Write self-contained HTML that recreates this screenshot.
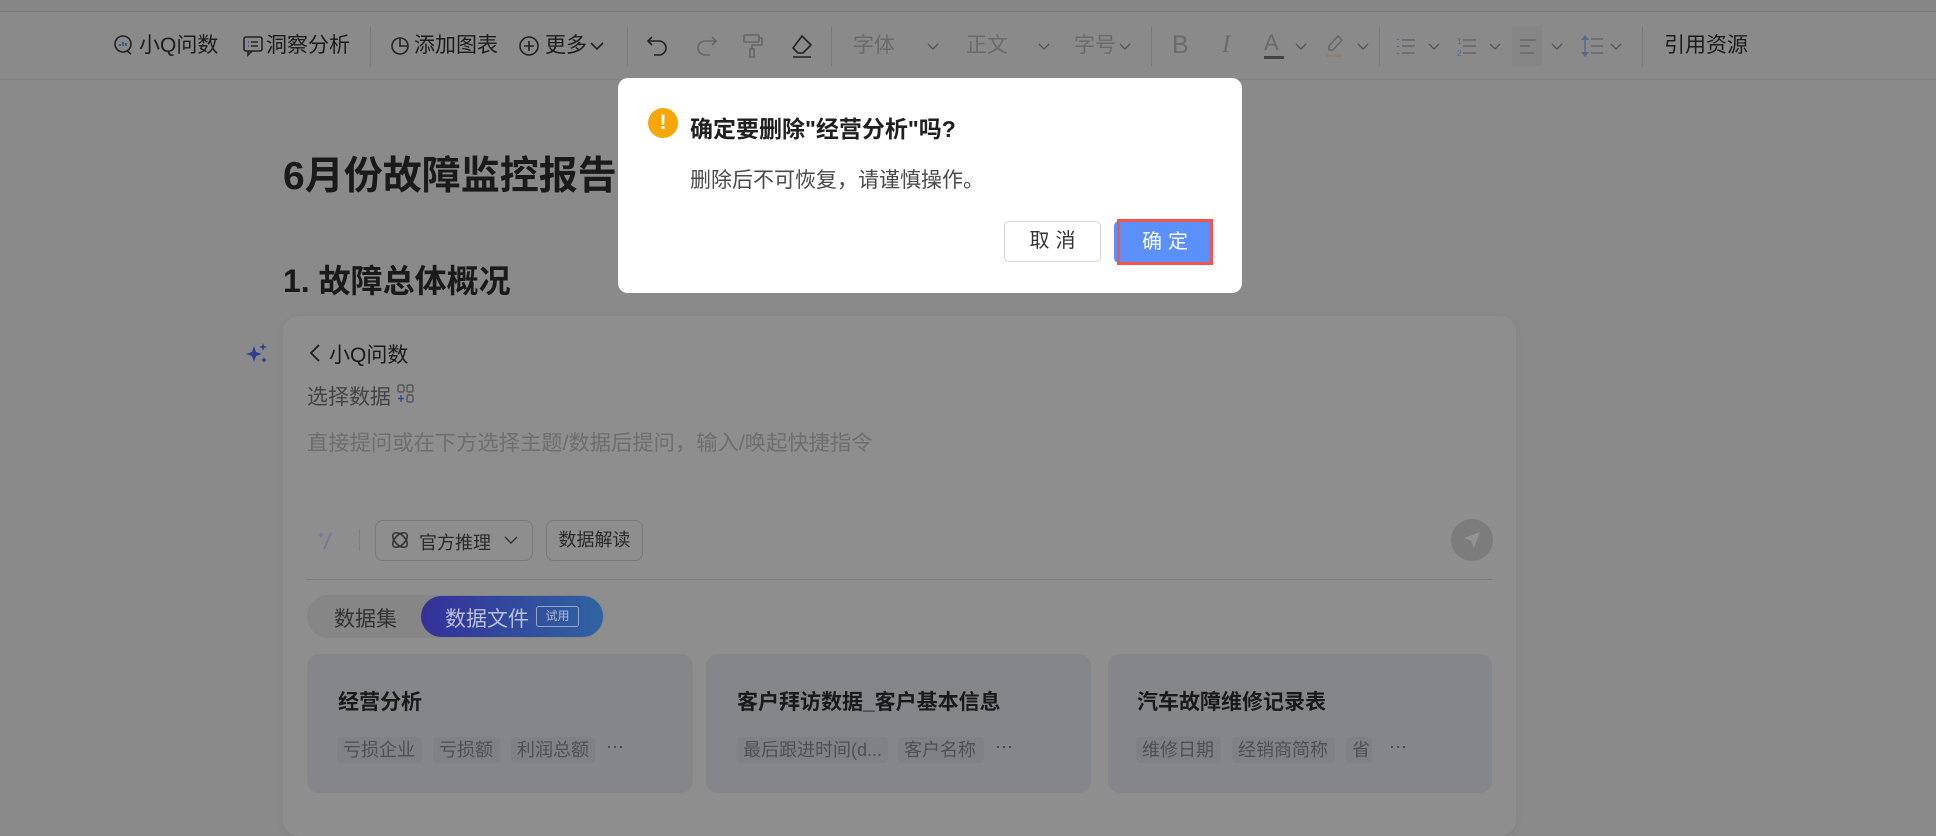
<!DOCTYPE html>
<html><head><meta charset="utf-8">
<style>
*{margin:0;padding:0;box-sizing:border-box}
body{width:1936px;height:808px;overflow:hidden;background:#8a8a8a;font-family:"Liberation Sans","Noto Sans CJK SC",sans-serif;position:relative;color:#1e1e1e}
.a{position:absolute;white-space:nowrap}
.tb{font-size:21px;line-height:24px;color:#1c1c1c}
.dis{color:#6a6a6a}
.sep{position:absolute;width:1px;background:#7a7a7a;top:26px;height:40px}
.chev{position:absolute;width:14px;height:10px}
.chip{position:absolute;height:26px;top:737px;background:#7f8185;border-radius:4px;font-size:18px;line-height:26px;color:#4e5054;padding:0 6px;white-space:nowrap;overflow:hidden}
.dc{position:absolute;top:654px;height:139px;background:#85868a;border-radius:12px}
.dct{position:absolute;top:686px;font-size:21px;font-weight:bold;color:#1a1a1a;white-space:nowrap}
.dots{position:absolute;top:736px;font-size:18px;color:#444}
</style></head><body>
<svg width="0" height="0" style="position:absolute"><defs><symbol id="cv" viewBox="0 0 14 10"><path d="M2 2l5 5 5-5" fill="none" stroke="#555" stroke-width="1.3"/></symbol></defs></svg>
<div class="a" style="left:0;top:0;width:1936px;height:12px;background:#868686;border-bottom:1px solid #7d7d7d"></div>
<div class="a" style="left:0;top:79px;width:1936px;height:1px;background:#7f7f7f"></div>

<svg class="a" style="left:113px;top:34px" width="22" height="22" viewBox="0 0 22 22"><circle cx="10" cy="10" r="8" fill="none" stroke="#222" stroke-width="1.6"/><path d="M7 12v-2M10 12V8M13 12v-3" stroke="#2d4ea0" stroke-width="1.6"/><path d="M14 17l4 3" stroke="#222" stroke-width="1.6"/></svg>
<div class="a tb" style="left:139px;top:34px">小Q问数</div>
<svg class="a" style="left:242px;top:35px" width="22" height="22" viewBox="0 0 22 22"><rect x="2" y="2" width="18" height="14" rx="2" fill="none" stroke="#222" stroke-width="1.6"/><path d="M6 16v4l4-4" fill="none" stroke="#222" stroke-width="1.6"/><path d="M6 7h1M6 11h1" stroke="#2d4ea0" stroke-width="1.6"/><path d="M9 7h7M9 11h7" stroke="#222" stroke-width="1.6"/></svg>
<div class="a tb" style="left:266px;top:34px">洞察分析</div>
<div class="sep" style="left:370px"></div>
<svg class="a" style="left:389px;top:35px" width="22" height="22" viewBox="0 0 22 22"><circle cx="11" cy="11" r="8" fill="none" stroke="#222" stroke-width="1.6"/><path d="M11 3v8h8" fill="none" stroke="#222" stroke-width="1.6"/></svg>
<div class="a tb" style="left:414px;top:34px">添加图表</div>
<svg class="a" style="left:518px;top:35px" width="22" height="22" viewBox="0 0 22 22"><circle cx="11" cy="11" r="9" fill="none" stroke="#222" stroke-width="1.6"/><path d="M11 6v10M6 11h10" stroke="#222" stroke-width="1.6"/></svg>
<div class="a tb" style="left:545px;top:34px">更多</div>
<svg class="a" style="left:589px;top:40px" width="16" height="12" viewBox="0 0 16 12"><path d="M2 3l6 6 6-6" fill="none" stroke="#222" stroke-width="1.6"/></svg>
<div class="sep" style="left:627px"></div>
<svg class="a" style="left:646px;top:33px" width="24" height="26" viewBox="0 0 24 26"><path d="M6 4L2 8l4 4M2 8h11a7 7 0 010 14H8" fill="none" stroke="#222" stroke-width="1.6"/></svg>
<svg class="a" style="left:694px;top:33px" width="24" height="26" viewBox="0 0 24 26"><path d="M18 4l4 4-4 4M22 8H11a7 7 0 000 14h5" fill="none" stroke="#666" stroke-width="1.6"/></svg>
<svg class="a" style="left:741px;top:33px" width="24" height="26" viewBox="0 0 24 26"><rect x="3" y="2" width="15" height="7" rx="1" fill="none" stroke="#666" stroke-width="1.6"/><path d="M18 5h3v7H11v4" fill="none" stroke="#666" stroke-width="1.6"/><rect x="9" y="16" width="4" height="8" fill="none" stroke="#666" stroke-width="1.6"/></svg>
<svg class="a" style="left:789px;top:33px" width="26" height="26" viewBox="0 0 26 26"><path d="M13 3l9 9-8 8H9l-5-5z" fill="none" stroke="#222" stroke-width="1.6"/><path d="M4 24h18" stroke="#222" stroke-width="1.6"/></svg>
<div class="sep" style="left:831px"></div>
<div class="a tb dis" style="left:853px;top:34px">字体</div>
<svg class="chev" style="left:926px;top:42px"><use href="#cv"/></svg>
<div class="a tb dis" style="left:966px;top:34px">正文</div>
<svg class="chev" style="left:1037px;top:42px"><use href="#cv"/></svg>
<div class="a tb dis" style="left:1074px;top:34px">字号</div>
<svg class="chev" style="left:1118px;top:42px"><use href="#cv"/></svg>
<div class="sep" style="left:1151px"></div>
<div class="a dis" style="left:1172px;top:31px;font-size:25px">B</div>
<div class="a dis" style="left:1222px;top:31px;font-size:25px;font-family:'Liberation Serif',serif;font-style:italic">I</div>
<div class="a dis" style="left:1264px;top:30px;font-size:22px">A</div>
<div class="a" style="left:1264px;top:56px;width:20px;height:3px;background:#444"></div>
<svg class="chev" style="left:1294px;top:42px"><use href="#cv"/></svg>
<svg class="a" style="left:1324px;top:33px" width="22" height="26" viewBox="0 0 22 26"><path d="M14 3l4 4-9 10H5v-4z" fill="none" stroke="#666" stroke-width="1.5"/><rect x="2" y="21" width="16" height="3" fill="#8a8371"/></svg>
<svg class="chev" style="left:1356px;top:42px"><use href="#cv"/></svg>
<div class="sep" style="left:1379px"></div>
<svg class="a" style="left:1395px;top:35px" width="22" height="22" viewBox="0 0 22 22"><path d="M3 4v1M3 11v1M3 18v1" stroke="#55698f" stroke-width="2"/><path d="M7 5h13M7 11h13M7 18h13" stroke="#666" stroke-width="1.5"/></svg>
<svg class="chev" style="left:1427px;top:42px"><use href="#cv"/></svg>
<svg class="a" style="left:1456px;top:35px" width="22" height="22" viewBox="0 0 22 22"><text x="1" y="9" font-size="8" fill="#55698f">1</text><text x="1" y="21" font-size="8" fill="#55698f">2</text><path d="M7 5h13M7 11h13M7 18h13" stroke="#666" stroke-width="1.5"/></svg>
<svg class="chev" style="left:1488px;top:42px"><use href="#cv"/></svg>
<div class="a" style="left:1512px;top:26px;width:30px;height:40px;background:#868686"></div>
<svg class="a" style="left:1518px;top:35px" width="22" height="22" viewBox="0 0 22 22"><path d="M2 5h16M2 11h10M2 18h14" stroke="#666" stroke-width="1.5"/></svg>
<svg class="chev" style="left:1550px;top:42px"><use href="#cv"/></svg>
<svg class="a" style="left:1580px;top:33px" width="24" height="26" viewBox="0 0 24 26"><path d="M5 2l-4 5h8zM5 24l-4-5h8z" fill="#55698f"/><path d="M5 7v12" stroke="#55698f" stroke-width="1.5"/><path d="M11 6h12M11 13h12M11 20h12" stroke="#666" stroke-width="1.5"/></svg>
<svg class="chev" style="left:1609px;top:42px"><use href="#cv"/></svg>
<div class="sep" style="left:1642px"></div>
<div class="a tb" style="left:1664px;top:34px">引用资源</div>

<div class="a" style="left:283px;top:145px;font-size:39px;font-weight:bold;color:#1a1a1a">6月份故障监控报告</div>
<div class="a" style="left:283px;top:256px;font-size:32px;font-weight:bold;color:#1a1a1a">1. 故障总体概况</div>
<svg class="a" style="left:245px;top:342px" width="24" height="24" viewBox="0 0 24 24"><path d="M9 4l2 6 6 2-6 2-2 6-2-6-6-2 6-2z" fill="#2f3f8f"/><path d="M18 1l1 3 3 1-3 1-1 3-1-3-3-1 3-1zM19 15l1 2 2 1-2 1-1 2-1-2-2-1 2-1z" fill="#2f3f8f"/></svg>

<div class="a" style="left:283px;top:316px;width:1233px;height:520px;background:#8e8e8e;border-radius:16px;box-shadow:0 2px 8px rgba(0,0,0,0.06)"></div>
<svg class="a" style="left:308px;top:342px" width="14" height="22" viewBox="0 0 14 22"><path d="M11 3L3 11l8 8" fill="none" stroke="#1c1c1c" stroke-width="1.8"/></svg>
<div class="a" style="left:329px;top:339px;font-size:21px;color:#1a1a1a">小Q问数</div>
<div class="a" style="left:307px;top:381px;font-size:21px;color:#444">选择数据</div>
<svg class="a" style="left:396px;top:383px" width="20" height="22" viewBox="0 0 20 22"><rect x="2" y="2" width="6" height="7" rx="1.5" fill="none" stroke="#555" stroke-width="1.4"/><rect x="11" y="2" width="6" height="7" rx="1.5" fill="none" stroke="#555" stroke-width="1.4"/><rect x="11" y="12" width="6" height="7" rx="1.5" fill="none" stroke="#555" stroke-width="1.4"/><path d="M5 12v7M2 15.5h6" stroke="#2d4ea0" stroke-width="1.4"/></svg>
<div class="a" style="left:307px;top:426px;font-size:21.3px;color:#6e6e6e">直接提问或在下方选择主题/数据后提问，输入/唤起快捷指令</div>
<svg class="a" style="left:316px;top:529px" width="20" height="22" viewBox="0 0 20 22"><path d="M15 4L8 20" stroke="#737a96" stroke-width="1.8"/><path d="M5 3l1 2 2 1-2 1-1 2-1-2-2-1 2-1z" fill="#737a96"/></svg>
<div class="a" style="left:359px;top:529px;width:1px;height:22px;background:#7f7f7f"></div>
<div class="a" style="left:375px;top:520px;width:158px;height:41px;border:1px solid #7a7a7a;border-radius:8px"></div>
<svg class="a" style="left:389px;top:529px" width="22" height="22" viewBox="0 0 22 22"><ellipse cx="11" cy="11" rx="9" ry="5" transform="rotate(45 11 11)" fill="none" stroke="#333" stroke-width="1.5"/><ellipse cx="11" cy="11" rx="9" ry="5" transform="rotate(-45 11 11)" fill="none" stroke="#333" stroke-width="1.5"/></svg>
<div class="a" style="left:419px;top:529px;font-size:18px;color:#2a2a2a">官方推理</div>
<svg class="a" style="left:503px;top:534px" width="16" height="12" viewBox="0 0 16 12"><path d="M2 3l6 6 6-6" fill="none" stroke="#333" stroke-width="1.4"/></svg>
<div class="a" style="left:546px;top:520px;width:97px;height:41px;border:1px solid #7a7a7a;border-radius:8px;font-size:18px;line-height:39px;text-align:center;color:#2a2a2a">数据解读</div>
<div class="a" style="left:1451px;top:519px;width:42px;height:42px;border-radius:50%;background:#7c7c7c"></div>
<svg class="a" style="left:1461px;top:529px" width="22" height="22" viewBox="0 0 22 22"><path d="M19 3L3 9l7 3 3 7z" fill="#929292"/></svg>
<div class="a" style="left:307px;top:579px;width:1185px;height:1px;background:#7e7e7e"></div>

<div class="a" style="left:307px;top:595px;width:297px;height:43px;border-radius:22px;background:#868686"></div>
<div class="a" style="left:334px;top:603px;font-size:21px;color:#333">数据集</div>
<div class="a" style="left:421px;top:596px;width:182px;height:41px;border-radius:21px;background:linear-gradient(90deg,#35309a,#2f63a0)"></div>
<div class="a" style="left:445px;top:603px;font-size:21px;color:#b9bfdc">数据文件</div>
<div class="a" style="left:536px;top:606px;width:43px;height:21px;border:1px solid #9aa3c8;border-radius:3px;font-size:12px;line-height:19px;text-align:center;color:#b0b8d8">试用</div>

<div class="dc" style="left:307px;width:386px"></div>
<div class="dc" style="left:706px;width:385px"></div>
<div class="dc" style="left:1108px;width:384px"></div>
<div class="dct" style="left:338px">经营分析</div>
<div class="dct" style="left:737px">客户拜访数据_客户基本信息</div>
<div class="dct" style="left:1137px">汽车故障维修记录表</div>
<div class="chip" style="left:337px;width:85px">亏损企业</div>
<div class="chip" style="left:433px;width:67px">亏损额</div>
<div class="chip" style="left:511px;width:84px">利润总额</div>
<div class="dots" style="left:606px">···</div>
<div class="chip" style="left:737px;width:151px">最后跟进时间(d...</div>
<div class="chip" style="left:898px;width:86px">客户名称</div>
<div class="dots" style="left:995px">···</div>
<div class="chip" style="left:1136px;width:85px">维修日期</div>
<div class="chip" style="left:1232px;width:103px">经销商简称</div>
<div class="chip" style="left:1346px;width:26px">省</div>
<div class="dots" style="left:1389px">···</div>

<div class="a" style="left:618px;top:78px;width:624px;height:215px;background:#fff;border-radius:10px"></div>
<div class="a" style="left:648px;top:108px;width:30px;height:30px;border-radius:50%;background:#f7a609;color:#fff;font-weight:bold;font-size:21px;line-height:30px;text-align:center">!</div>
<div class="a" style="left:690px;top:110px;font-size:23px;font-weight:bold;color:#1f1f1f">确定要删除"经营分析"吗?</div>
<div class="a" style="left:690px;top:164px;font-size:21px;color:#4a4a4a">删除后不可恢复，请谨慎操作。</div>
<div class="a" style="left:1004px;top:221px;width:97px;height:41px;border:1px solid #d6d6d6;border-radius:5px;font-size:20px;line-height:39px;text-align:center;color:#333;letter-spacing:6px;text-indent:6px">取消</div>
<div class="a" style="left:1114px;top:221px;width:98px;height:42px;border-radius:5px;background:#5b8ff9"></div>
<div class="a" style="left:1117px;top:219px;width:96px;height:46px;border:3px solid #f0554f;font-size:20px;line-height:40px;text-align:center;color:#fff;letter-spacing:6px;text-indent:6px">确定</div>
</body></html>
